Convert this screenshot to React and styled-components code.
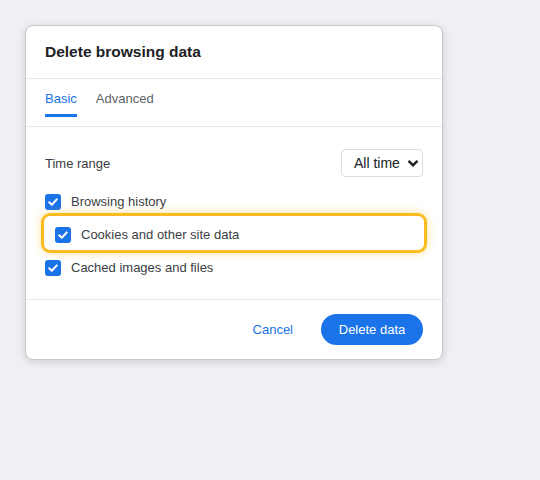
import React from 'react'
import styled, { createGlobalStyle } from 'styled-components'

const GlobalStyle = createGlobalStyle`
body {
    margin: 0;
    background: #eff0f3;
    font-family: "Liberation Sans", Arial, sans-serif;
}
`

const Page = styled.div`
width: 540px;
height: 480px;
padding: 25px;
box-sizing: border-box;
`
const Dialog = styled.div`
width: 418px;
height: 335px;
box-sizing: border-box;
background: #fff;
border: 1px solid #c6c8cc;
border-radius: 8px;
box-shadow: 0 2px 8px rgba(0, 0, 0, 0.14);
display: flex;
flex-direction: column;
`
const Header = styled.div`
height: 53px;
padding: 0 19px;
display: flex;
align-items: center;
box-sizing: border-box;
border-bottom: 1px solid #e8e9eb;
`
const Title = styled.h1`
margin: 0;
font-size: 15.5px;
font-weight: 700;
color: #202124;
`
const Tabs = styled.div`
height: 48px;
padding: 11px 19px 0;
display: flex;
align-items: flex-start;
gap: 19px;
box-sizing: border-box;
border-bottom: 1px solid #e8e9eb;
`
const Tab = styled.div`
font-size: 13px;
line-height: 18px;
padding-bottom: 6px;
color: ${({ active }) => active ? '#1a73e8' : '#5f6368'};
border-bottom: 3px solid ${({ active }) => active ? '#1a73e8' : 'transparent'};
`
const Body = styled.div`
height: 173px;
box-sizing: border-box;
padding: 22px 19px 0;
border-bottom: 1px solid #e8e9eb;
display: flex;
flex-direction: column;
`
const RangeRow = styled.div`
display: flex;
justify-content: space-between;
align-items: center;
height: 28px;
margin-bottom: 8px;
font-size: 13px;
color: #3c4043;
`
const Select = styled.div`
height: 28px;
width: 82px;
box-sizing: border-box;
border: 1px solid #dadce0;
border-radius: 4px;
display: flex;
align-items: center;
justify-content: space-between;
padding: 0 2px 0 12px;
font-size: 14px;
color: #202124;
`
const CheckRow = styled.div`
position: relative;
height: 33px;
display: flex;
align-items: center;
gap: 10px;
padding-left: ${({ highlighted }) => highlighted ? '10px' : '0'};
font-size: 13px;
color: #3c4043;

${({ highlighted }) => highlighted && `
&::after {
    content: '';
    position: absolute;
    top: -5px;
    bottom: -2px;
    left: -4px;
    right: -4px;
    border: 3px solid #fbbc1f;
    border-radius: 9px;
    box-shadow: 0 0 8px rgba(251, 188, 31, 0.45);
    pointer-events: none;
}
`}
`
const Box = styled.span`
width: 16px;
height: 16px;
border-radius: 3px;
background: #1a73e8;
display: flex;
align-items: center;
justify-content: center;
flex-shrink: 0;
`
const Footer = styled.div`
flex: 1;
display: flex;
justify-content: flex-end;
align-items: center;
gap: 14px;
padding: 0 19px;
`
const TextButton = styled.button`
border: none;
background: none;
color: #1a73e8;
font-family: inherit;
font-size: 13px;
padding: 0 14px;
height: 31px;
`
const PrimaryButton = styled.button`
border: none;
background: #1a73e8;
color: #fff;
font-family: inherit;
font-size: 13px;
height: 31px;
width: 102px;
border-radius: 16px;
`

const Check = () => (
    <Box>
        <svg width="12" height="12" viewBox="0 0 12 12">
            <path d="M2.2 6.3 L4.8 8.8 L9.8 3.4" fill="none" stroke="#fff" strokeWidth="2" strokeLinecap="round" strokeLinejoin="round" />
        </svg>
    </Box>
)

const Chevron = () => (
    <svg width="14" height="14" viewBox="0 0 14 14">
        <path d="M2.5 4.8 L7 9.2 L11.5 4.8" fill="none" stroke="#202124" strokeWidth="2.4" />
    </svg>
)

const items = [
    { text: 'Browsing history' },
    { text: 'Cookies and other site data', highlighted: true },
    { text: 'Cached images and files' },
]

export default function App() {
    return (
        <Page>
            <GlobalStyle />
            <Dialog>
                <Header>
                    <Title>Delete browsing data</Title>
                </Header>
                <Tabs>
                    <Tab active>Basic</Tab>
                    <Tab>Advanced</Tab>
                </Tabs>
                <Body>
                    <RangeRow>
                        Time range
                        <Select>
                            All time
                            <Chevron />
                        </Select>
                    </RangeRow>
                    {items.map((item, index) => (
                        <CheckRow key={index} highlighted={item.highlighted}>
                            <Check />
                            {item.text}
                        </CheckRow>
                    ))}
                </Body>
                <Footer>
                    <TextButton>Cancel</TextButton>
                    <PrimaryButton>Delete data</PrimaryButton>
                </Footer>
            </Dialog>
        </Page>
    )
}
